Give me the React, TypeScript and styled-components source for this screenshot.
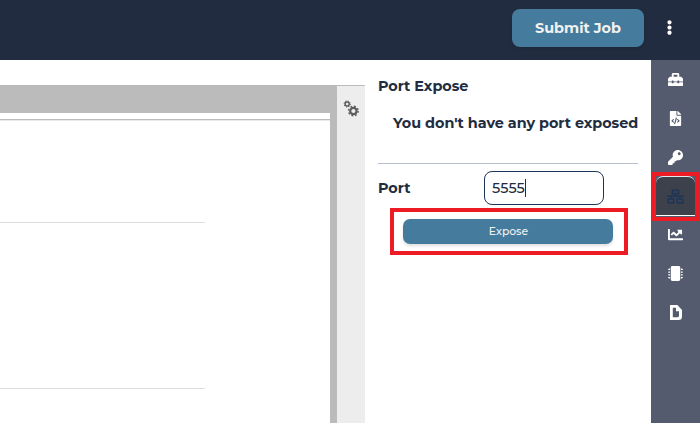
import React from 'react';
import styled, { createGlobalStyle } from 'styled-components';
import {
  FaChartLine,
  FaEllipsisV,
  FaFileCode,
  FaKey,
  FaMicrochip,
  FaToolbox,
} from 'react-icons/fa';

const GlobalStyle = createGlobalStyle`
  * { box-sizing: border-box; }
  body {
    margin: 0;
    overflow: hidden;
    background: #fff;
    color: #222c40;
    font-family: Montserrat, Inter, sans-serif;
  }
  button { font-family: inherit; border: 0; padding: 0; }
`;

const Page = styled.div`
  display: flex;
  flex-direction: column;
  width: 700px;
  height: 423px;
`;

const TopBar = styled.header`
  display: flex;
  align-items: center;
  justify-content: flex-end;
  height: 60px;
  padding: 0 23px 4px 0;
  gap: 18px;
  background: #222c40;
`;

const SubmitButton = styled.button`
  width: 132px;
  height: 38px;
  border-radius: 8px;
  background: #457b9d;
  color: #f1f1f1;
  font-size: 14.4px;
  font-weight: 700;
  box-shadow: 0 1px 3px rgba(0, 0, 0, 0.15);
`;

const MenuButton = styled.button`
  display: flex;
  align-items: center;
  justify-content: center;
  width: 15px;
  height: 20px;
  margin-top: -2px;
  background: none;
  color: #fff;
  font-size: 15px;
`;

const Body = styled.div`
  display: flex;
  flex: 1;
`;

const Workspace = styled.main`
  display: flex;
  width: 365px;
  padding-top: 25px;
`;

const Notebook = styled.section`
  width: 337px;
  border-top: 28px solid #bbb;
  border-right: 7px solid #bbb;
`;

const NotebookHeader = styled.div`
  height: 7px;
  border-bottom: 1px solid #bbb;
  box-shadow: 0 1px 0 #e9e9e9;
`;

const Cell = styled.div<{ $height: number }>`
  width: 205px;
  height: ${({ $height }) => $height}px;
  border-bottom: 1px solid #dedede;
`;

const SettingsStrip = styled.aside`
  display: flex;
  justify-content: center;
  width: 28px;
  padding-top: 14px;
  border-top: 1px solid #bbb;
  background: #ededed;
  color: #5c5c5c;
`;

const PortPanel = styled.section`
  width: 286px;
  padding: 16px 13px 0;
`;

const Title = styled.h2`
  margin: 0;
  height: 20px;
  font-size: 14.4px;
  line-height: 20px;
  font-weight: 700;
  letter-spacing: -0.04px;
  white-space: nowrap;
`;

const EmptyMessage = styled.p`
  margin: 17px 0 0 15px;
  height: 20px;
  font-size: 14.4px;
  line-height: 20px;
  font-weight: 700;
  letter-spacing: -0.04px;
  white-space: nowrap;
`;

const Divider = styled.hr`
  height: 1px;
  margin: 30px 0 7px;
  border: 0;
  background: #b8bdd0;
`;

const PortRow = styled.label`
  display: flex;
  align-items: center;
  height: 34px;
  font-size: 14.4px;
  font-weight: 700;
`;

const PortLabel = styled.span`
  width: 106px;
`;

const PortField = styled.span`
  display: flex;
  align-items: center;
  width: 120px;
  height: 34px;
  padding-left: 7px;
  border: 1px solid #1d3557;
  border-radius: 8px;
  font-size: 14.4px;
  font-weight: 500;
`;

const Caret = styled.span`
  width: 1px;
  height: 18px;
  background: #222c40;
`;

const ExposeHighlight = styled.div`
  width: 238px;
  height: 47px;
  margin: 3px 0 0 12px;
  padding: 7px 9px;
  border: 4px solid #ed1c24;
`;

const ExposeButton = styled.button`
  display: block;
  width: 210px;
  height: 25px;
  padding: 0 0 1px 1px;
  border-radius: 7px;
  background: #457b9d;
  color: #f1f1f1;
  font-size: 10.8px;
  font-weight: 500;
  box-shadow: 0 2px 3px rgba(0, 0, 0, 0.12);
`;

const Sidebar = styled.nav`
  display: flex;
  flex-direction: column;
  align-items: center;
  width: 49px;
  background: #545b6e;
`;

const SideItem = styled.div`
  display: flex;
  align-items: center;
  justify-content: center;
  width: 49px;
  height: 39px;
  color: #fff;
  font-size: 15px;
`;

const ActiveHighlight = styled.div`
  width: 47px;
  height: 49px;
  margin: -5px 0 -6px;
  border: 4px solid #ed1c24;
  background: #545b6e;
`;

const ActiveItem = styled.div`
  display: flex;
  align-items: center;
  justify-content: center;
  height: 40px;
  border-top: 1px solid #e5e7eb;
  border-bottom: 1px solid #fff;
  border-radius: 7px 7px 0 0;
  background: #3d414b;
  color: #1d3557;
`;

function GearsIcon() {
  return (
    <svg width="16" height="17" viewBox="0 0 16 17" fill="none" stroke="currentColor">
      <circle cx="4.2" cy="4" r="2" strokeWidth="1.4" />
      <circle cx="4.2" cy="4" r="3" strokeWidth="1.1" strokeDasharray="1.18 1.18" />
      <circle cx="10.4" cy="11" r="3.2" strokeWidth="2.2" />
      <circle cx="10.4" cy="11" r="4.8" strokeWidth="1.4" strokeDasharray="1.885 1.885" />
    </svg>
  );
}

function NetworkIcon() {
  return (
    <svg width="17" height="15" viewBox="0 0 17 15" fill="none" stroke="currentColor" strokeWidth="1.5">
      <rect x="5.5" y="1.2" width="6" height="3.6" />
      <path d="M8.5 5V7M0 7.2H17M4 7V10M13 7V10" />
      <rect x="1.2" y="10" width="5.6" height="3.8" />
      <rect x="10.2" y="10" width="5.6" height="3.8" />
    </svg>
  );
}

function DocumentIcon() {
  return (
    <svg width="12" height="15" viewBox="0 0 12 15">
      <path
        fill="currentColor"
        fillRule="evenodd"
        d="M0 0H7.4L12 5V11.5Q12 15 8.5 15H0ZM2.8 2.8V12.2H7.7Q9 12.2 9 10.8V6.2H6V2.8Z"
      />
    </svg>
  );
}

export default function App() {
  return (
    <>
      <GlobalStyle />
      <Page>
        <TopBar>
          <SubmitButton>Submit Job</SubmitButton>
          <MenuButton aria-label="Menu"><FaEllipsisV /></MenuButton>
        </TopBar>
        <Body>
          <Workspace>
            <Notebook>
              <NotebookHeader />
              <Cell $height={103} />
              <Cell $height={166} />
            </Notebook>
            <SettingsStrip><GearsIcon /></SettingsStrip>
          </Workspace>
          <PortPanel>
            <Title>Port Expose</Title>
            <EmptyMessage>You don't have any port exposed</EmptyMessage>
            <Divider />
            <PortRow>
              <PortLabel>Port</PortLabel>
              <PortField>5555<Caret /></PortField>
            </PortRow>
            <ExposeHighlight>
              <ExposeButton>Expose</ExposeButton>
            </ExposeHighlight>
          </PortPanel>
          <Sidebar>
            <SideItem><FaToolbox /></SideItem>
            <SideItem><FaFileCode /></SideItem>
            <SideItem><FaKey /></SideItem>
            <ActiveHighlight>
              <ActiveItem><NetworkIcon /></ActiveItem>
            </ActiveHighlight>
            <SideItem><FaChartLine /></SideItem>
            <SideItem><FaMicrochip /></SideItem>
            <SideItem><DocumentIcon /></SideItem>
          </Sidebar>
        </Body>
      </Page>
    </>
  );
}
